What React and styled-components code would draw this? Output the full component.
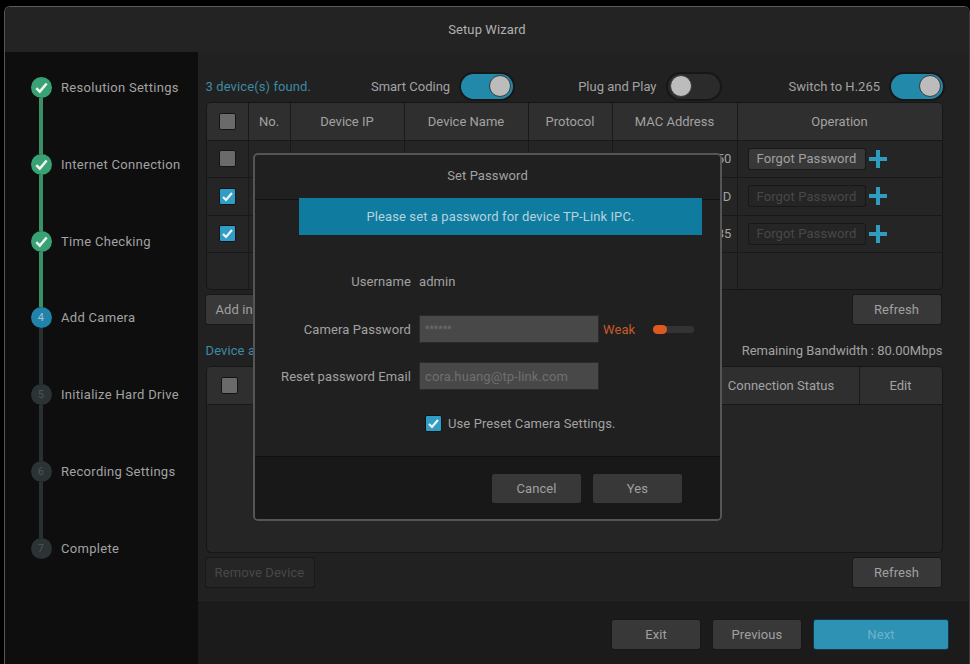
import styled, { createGlobalStyle } from "styled-components";

const GlobalStyle = createGlobalStyle`
  html, body {
    margin: 0;
    background: #000;
    width: 970px;
    height: 664px;
    overflow: hidden;
  }
  * { box-sizing: border-box; }
  body {
    font-family: Roboto, "Liberation Sans", sans-serif;
    font-size: 13px;
    letter-spacing: 0.1px;
    color: #a2a2a2;
  }
`;

const Screen = styled.div`
  position: relative;
  width: 970px;
  height: 664px;
  padding: 6px 0 0 4px;
`;
const Wizard = styled.div`
  width: 966px;
  height: 658px;
  display: flex;
  flex-direction: column;
  border-top: 1.5px solid #5a5a5a;
  border-left: 1.5px solid #555;
  border-right: 1px solid #3a3a3a;
  border-top-left-radius: 6px;
  border-top-right-radius: 6px;
  overflow: hidden;
`;
const TitleBar = styled.div`
  height: 45px;
  flex: none;
  display: flex;
  align-items: center;
  justify-content: center;
  background: #232323;
  color: #b0b0b0;
`;
const Body = styled.div`
  flex: 1;
  display: flex;
  min-height: 0;
`;
const Sidebar = styled.div`
  width: 193px;
  flex: none;
  background: #0e0e0e;
  padding: 25px 0 0 26px;
`;
const Step = styled.div`
  height: 76.8px;
  display: flex;
  gap: 10px;
`;
const Rail = styled.div`
  width: 20px;
  display: flex;
  flex-direction: column;
  align-items: center;
`;
const Dot = styled.div`
  width: 21px;
  height: 21px;
  flex: none;
  border-radius: 50%;
  display: flex;
  align-items: center;
  justify-content: center;
  font-size: 11px;
  background: ${(p) =>
    p.$state === "done" ? "#38a275" : p.$state === "active" ? "#2183a9" : "#2b3335"};
  color: ${(p) => (p.$state === "active" ? "#9fc6d6" : "#4b5557")};
`;
const Line = styled.div`
  flex: 1;
  width: 4px;
  background: ${(p) => (p.$done ? "#3c8e66" : "#2a3032")};
`;
const StepLabel = styled.div`
  line-height: 22px;
  letter-spacing: 0.3px;
  color: #a2a2a2;
`;
const Main = styled.div`
  flex: 1;
  display: flex;
  flex-direction: column;
  background: #212121;
  min-width: 0;
`;
const Content = styled.div`
  height: 551px;
  flex: none;
  padding: 18px 23px 0 7.5px;
  border-bottom: 1px solid #161616;
`;
const Toolbar = styled.div`
  height: 32px;
  padding-right: 1px;
  display: flex;
  align-items: center;
`;
const BlueText = styled.span`
  color: #3d8aa5;
  flex: 1;
`;
const ToggleLabel = styled.span`
  margin-right: 9px;
  margin-left: ${(p) => p.$gap || 0}px;
  letter-spacing: 0;
`;
const Toggle = styled.div`
  width: 56px;
  height: 29px;
  flex: none;
  border-radius: 15px;
  border: 2px solid #171717;
  background: ${(p) => (p.$on ? "#2389ab" : "#2b2b2b")};
  display: flex;
  align-items: center;
  justify-content: ${(p) => (p.$on ? "flex-end" : "flex-start")};
  padding: 0 2px;
`;
const Thumb = styled.div`
  width: 22px;
  height: 22px;
  border-radius: 50%;
  background: #bcbcbc;
  border: 1px solid #3a3a3a;
`;
const Table = styled.div`
  width: 737px;
  height: ${(p) => p.$height}px;
  margin-top: ${(p) => p.$top || 0}px;
  background: #252525;
  border: 1px solid #161616;
  border-radius: 5px;
  overflow: hidden;
`;
const Row = styled.div`
  height: 37.5px;
  display: grid;
  grid-template-columns: ${(p) => p.$cols};
  background: ${(p) => (p.$head ? "#2f2f2f" : "transparent")};
  border-bottom: 1px solid #191919;
  letter-spacing: ${(p) => (p.$head ? "0" : "inherit")};
`;
const Cell = styled.div`
  display: flex;
  align-items: center;
  justify-content: ${(p) => p.$justify || "center"};
  padding: ${(p) => p.$pad || "0"};
  gap: 4px;
  border-right: 1px solid #191919;
  &:last-child { border-right: 0; }
`;
const Box = styled.div`
  width: 17px;
  height: 17px;
  flex: none;
  border-radius: 2px;
  background: ${(p) => (p.$checked ? "#2f9dc6" : "#6a6a6a")};
  border: 1px solid #141414;
  display: flex;
  align-items: center;
  justify-content: center;
`;
const ActionRow = styled.div`
  height: 29px;
  margin-top: ${(p) => p.$top}px;
  width: 735px;
  display: flex;
  justify-content: space-between;
`;
const Button = styled.div`
  width: ${(p) => p.$width || 88}px;
  height: ${(p) => p.$height || 29}px;
  border-radius: 2px;
  display: flex;
  align-items: center;
  justify-content: ${(p) => p.$justify || "center"};
  padding: ${(p) => p.$pad || "0"};
  flex: none;
  background: ${(p) => (p.$primary ? "#2e92b4" : p.$disabled ? "#252525" : "#383838")};
  color: ${(p) => (p.$primary ? "#6fb1c8" : p.$disabled ? "#484848" : "#a0a0a0")};
  box-shadow: 0 0 0 1px ${(p) => (p.$primary ? "#12364a" : "#181818")};
`;
const SectionRow = styled.div`
  height: 26px;
  margin-top: 13px;
  width: 737px;
  display: flex;
  align-items: center;
  justify-content: space-between;
`;
const Bandwidth = styled.span`
  letter-spacing: 0;
`;
const TableBody = styled.div`
  height: 148px;
`;
const Footer = styled.div`
  flex: 1;
  background: #1b1b1b;
  display: flex;
  justify-content: flex-end;
  align-items: flex-start;
  gap: 13px;
  padding: 17px 21px 0 0;
`;

const Modal = styled.div`
  position: absolute;
  left: 253px;
  top: 153px;
  width: 469px;
  height: 368px;
  display: flex;
  flex-direction: column;
  background: #202020;
  border: 2px solid #555;
  border-radius: 5px;
  overflow: hidden;
`;
const ModalTitle = styled.div`
  height: 45px;
  flex: none;
  padding-top: 13px;
  text-align: center;
  color: #a2a2a2;
  border-bottom: 1px solid #121212;
`;
const Banner = styled.div`
  height: 37px;
  margin: -2px 18px 0 44px;
  flex: none;
  display: flex;
  align-items: center;
  justify-content: center;
  background: #0f7b9e;
  color: #b5d3de;
`;
const ModalForm = styled.div`
  flex: 1;
  padding-top: 32px;
`;
const FormRow = styled.div`
  display: flex;
  align-items: center;
  height: 28px;
  margin-top: ${(p) => p.$top || 0}px;
`;
const FormLabel = styled.div`
  width: 156px;
  text-align: right;
  margin-right: 8px;
  white-space: nowrap;
`;
const Input = styled.div`
  width: 180px;
  height: 28px;
  background: #484848;
  border: 1px solid #2b2b2b;
  color: #6f6f6f;
  display: flex;
  align-items: center;
  padding-left: 5px;
  font-size: ${(p) => p.$size || 13}px;
`;
const Weak = styled.span`
  color: #c95a2a;
  margin-left: 4px;
`;
const Slider = styled.div`
  width: 41px;
  height: 7px;
  margin-left: 18px;
  border-radius: 4px;
  background: #333;
  display: flex;
  align-items: center;
`;
const SliderKnob = styled.div`
  width: 14px;
  height: 9px;
  border-radius: 5px;
  background: #dc5a20;
`;
const PresetRow = styled.div`
  display: flex;
  align-items: center;
  gap: 6px;
  height: 17px;
  margin: 25px 0 0 170px;
`;
const ModalFooter = styled.div`
  height: 63px;
  flex: none;
  background: #181818;
  border-top: 1px solid #111;
  display: flex;
  justify-content: flex-end;
  gap: 12px;
  padding: 17px 38px 0 0;
`;

const Check = ({ size = 13 }) => (
  <svg width={size} height={size} viewBox="0 0 13 13" fill="none">
    <path d="M2 7l3 3 6-7" stroke="#f2f2f2" strokeWidth="2.2" />
  </svg>
);

const Plus = () => (
  <svg width="18" height="18" viewBox="0 0 18 18">
    <path d="M7 0h4v7h7v4h-7v7H7v-7H0V7h7z" fill="#2f9cc0" />
  </svg>
);

const steps = [
  { label: "Resolution Settings", state: "done" },
  { label: "Internet Connection", state: "done" },
  { label: "Time Checking", state: "done" },
  { label: "Add Camera", state: "active", n: 4 },
  { label: "Initialize Hard Drive", n: 5 },
  { label: "Recording Settings", n: 6 },
  { label: "Complete", n: 7 },
];

const cols1 = "42px 42px 114px 124px 84px 125px 1fr";
const cols2 = "47px 450px 156px 1fr";

const devices = [
  { tail: "50", checked: false, disabled: false },
  { tail: "D", checked: true, disabled: true },
  { tail: "35", checked: true, disabled: true },
];

export default function App() {
  return (
    <Screen>
      <GlobalStyle />
      <Wizard>
        <TitleBar>Setup Wizard</TitleBar>
        <Body>
          <Sidebar>
            {steps.map((step, i) => (
              <Step key={step.label}>
                <Rail>
                  <Dot $state={step.state}>
                    {step.state === "done" ? <Check size={15} /> : step.n}
                  </Dot>
                  {i < steps.length - 1 && <Line $done={step.state === "done"} />}
                </Rail>
                <StepLabel>{step.label}</StepLabel>
              </Step>
            ))}
          </Sidebar>
          <Main>
            <Content>
              <Toolbar>
                <BlueText>3 device(s) found.</BlueText>
                <ToggleLabel>Smart Coding</ToggleLabel>
                <Toggle $on><Thumb /></Toggle>
                <ToggleLabel $gap={63}>Plug and Play</ToggleLabel>
                <Toggle><Thumb /></Toggle>
                <ToggleLabel $gap={67}>Switch to H.265</ToggleLabel>
                <Toggle $on><Thumb /></Toggle>
              </Toolbar>
              <Table $height={188}>
                <Row $head $cols={cols1}>
                  <Cell><Box /></Cell>
                  <Cell>No.</Cell>
                  <Cell>Device IP</Cell>
                  <Cell>Device Name</Cell>
                  <Cell>Protocol</Cell>
                  <Cell>MAC Address</Cell>
                  <Cell>Operation</Cell>
                </Row>
                {devices.map((d) => (
                  <Row key={d.tail} $cols={cols1}>
                    <Cell><Box $checked={d.checked}>{d.checked && <Check />}</Box></Cell>
                    <Cell />
                    <Cell />
                    <Cell />
                    <Cell />
                    <Cell $justify="flex-end" $pad="0 5px 0 0">{d.tail}</Cell>
                    <Cell $justify="flex-start" $pad="0 0 0 11px">
                      <Button $width={116} $height={20} $disabled={d.disabled}>Forgot Password</Button>
                      <Plus />
                    </Cell>
                  </Row>
                ))}
                <Row $cols={cols1}>
                  <Cell /><Cell /><Cell /><Cell /><Cell /><Cell /><Cell />
                </Row>
              </Table>
              <ActionRow $top={5}>
                <Button $justify="flex-start" $pad="0 0 0 10px">Add in</Button>
                <Button>Refresh</Button>
              </ActionRow>
              <SectionRow>
                <BlueText>Device a</BlueText>
                <Bandwidth>Remaining Bandwidth : 80.00Mbps</Bandwidth>
              </SectionRow>
              <Table $height={187} $top={3}>
                <Row $head $cols={cols2}>
                  <Cell><Box /></Cell>
                  <Cell />
                  <Cell>Connection Status</Cell>
                  <Cell>Edit</Cell>
                </Row>
                <TableBody />
              </Table>
              <ActionRow $top={5}>
                <Button $width={108} $disabled>Remove Device</Button>
                <Button>Refresh</Button>
              </ActionRow>
            </Content>
            <Footer>
              <Button>Exit</Button>
              <Button>Previous</Button>
              <Button $width={134} $primary>Next</Button>
            </Footer>
          </Main>
        </Body>
      </Wizard>
      <Modal>
        <ModalTitle>Set Password</ModalTitle>
        <Banner>Please set a password for device TP-Link IPC.</Banner>
        <ModalForm>
          <FormRow>
            <FormLabel>Username</FormLabel>
            admin
          </FormRow>
          <FormRow $top={20}>
            <FormLabel>Camera Password</FormLabel>
            <Input $size={10}>******</Input>
            <Weak>Weak</Weak>
            <Slider><SliderKnob /></Slider>
          </FormRow>
          <FormRow $top={19}>
            <FormLabel>Reset password Email</FormLabel>
            <Input>cora.huang@tp-link.com</Input>
          </FormRow>
          <PresetRow>
            <Box $checked><Check /></Box>
            Use Preset Camera Settings.
          </PresetRow>
        </ModalForm>
        <ModalFooter>
          <Button $width={89}>Cancel</Button>
          <Button $width={89}>Yes</Button>
        </ModalFooter>
      </Modal>
    </Screen>
  );
}
